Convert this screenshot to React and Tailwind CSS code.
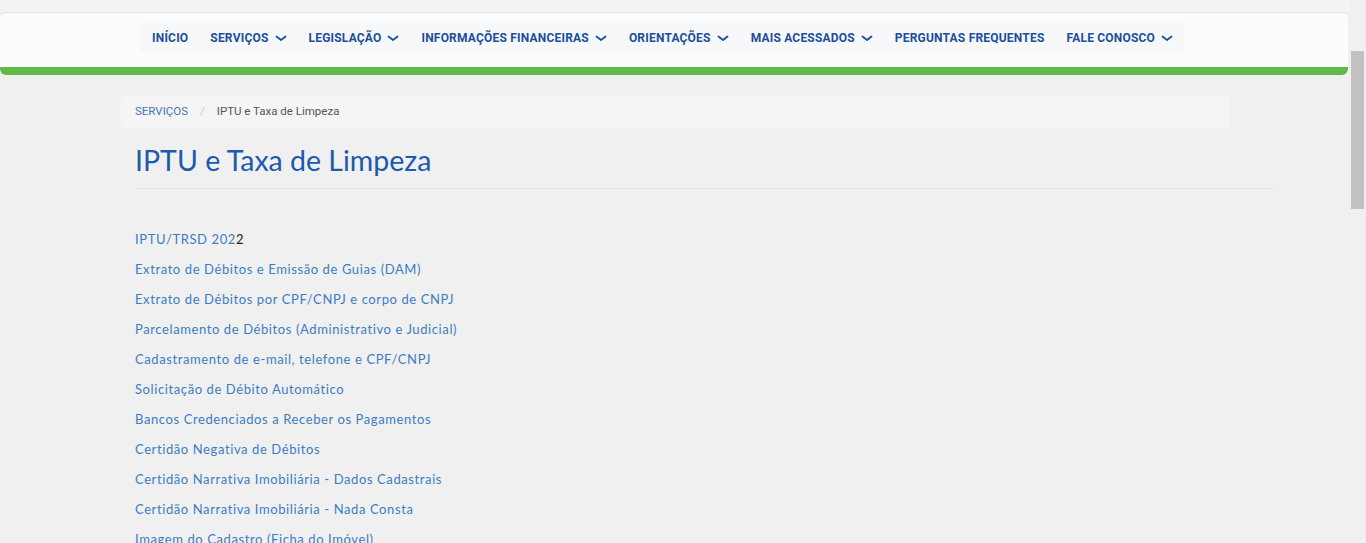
const menu = [
    { label: "INÍCIO" },
    { label: "SERVIÇOS", sub: true },
    { label: "LEGISLAÇÃO", sub: true },
    { label: "INFORMAÇÕES FINANCEIRAS", sub: true },
    { label: "ORIENTAÇÕES", sub: true },
    { label: "MAIS ACESSADOS", sub: true },
    { label: "PERGUNTAS FREQUENTES" },
    { label: "FALE CONOSCO", sub: true },
]

const links = [
    "Extrato de Débitos e Emissão de Guias (DAM)",
    "Extrato de Débitos por CPF/CNPJ e corpo de CNPJ",
    "Parcelamento de Débitos (Administrativo e Judicial)",
    "Cadastramento de e-mail, telefone e CPF/CNPJ",
    "Solicitação de Débito Automático",
    "Bancos Credenciados a Receber os Pagamentos",
    "Certidão Negativa de Débitos",
    "Certidão Narrativa Imobiliária - Dados Cadastrais",
    "Certidão Narrativa Imobiliária - Nada Consta",
    "Imagem do Cadastro (Ficha do Imóvel)",
    "Revisão de Lançamento",
]

function Chevron() {
    return (
        <svg width="12" height="7" viewBox="0 0 12 7" fill="none" className="mt-[2px]">
            <path d="M1.5 1.5 L6 5 L10.5 1.5" stroke="currentColor" strokeWidth="1.8" strokeLinecap="round" strokeLinejoin="round" />
        </svg>
    )
}

function NavItem({ item }) {
    return (
        <a href="#" className="flex items-center gap-[6px] px-[11px] whitespace-nowrap text-[12px] tracking-[0.2px] font-bold text-[#1b4f9c]">
            <span>{item.label}</span>
            {item.sub && <Chevron />}
        </a>
    )
}

function App() {
    return (
        <div className="flex h-[543px] overflow-hidden bg-[#f0f0f0] font-['Roboto',sans-serif]">
            <div className="flex-1 min-w-0">
                <div className="h-3 bg-[#f3f3f3]" />
                <header className="mr-[2px] bg-[#fbfcfe] border-t border-[#dde5ee] rounded-t-md">
                    <div className="h-[54px] pl-[140px] pt-[9px]">
                        <nav className="inline-flex items-center h-[31px] bg-[#f6f8fa] pl-px">
                            {menu.map(item => <NavItem key={item.label} item={item} />)}
                        </nav>
                    </div>
                    <div className="h-2 bg-[#63b946] rounded-b-md" />
                </header>

                <main className="pl-[120px] pt-[21px]">
                    <div className="w-[1110px] h-8 flex items-center gap-3 px-[15px] bg-[#f5f5f5] rounded-md text-[11.5px]">
                        <a href="#" className="text-[#4a78b5]">SERVIÇOS</a>
                        <span className="text-[#c8c8c8]">/</span>
                        <span className="text-[#555]">IPTU e Taxa de Limpeza</span>
                    </div>

                    <div className="pl-[15px]">
                        <h1 className="mt-[15px] pb-[11px] w-[1140px] border-b border-[#e6e6e6] text-[28.5px] leading-[34px] text-[#1c5aad] font-['Lato',sans-serif]">
                            IPTU e Taxa de Limpeza
                        </h1>

                        <ul className="mt-[40px] flex flex-col font-['Lato',sans-serif] text-[13px] tracking-[0.6px] text-[#3b7dc4]">
                            <li className="h-[30px] leading-[20px]">
                                <a href="#">IPTU/TRSD 202<span className="text-[#222]">2</span></a>
                            </li>
                            {links.map(text => (
                                <li key={text} className="h-[30px] leading-[20px]">
                                    <a href="#">{text}</a>
                                </li>
                            ))}
                        </ul>
                    </div>
                </main>
            </div>
            <div className="w-4 bg-[#f0f0f0]">
                <div className="mt-[51px] ml-px w-[13px] h-[158px] bg-[#c1c1c1]" />
            </div>
        </div>
    )
}

export default App
